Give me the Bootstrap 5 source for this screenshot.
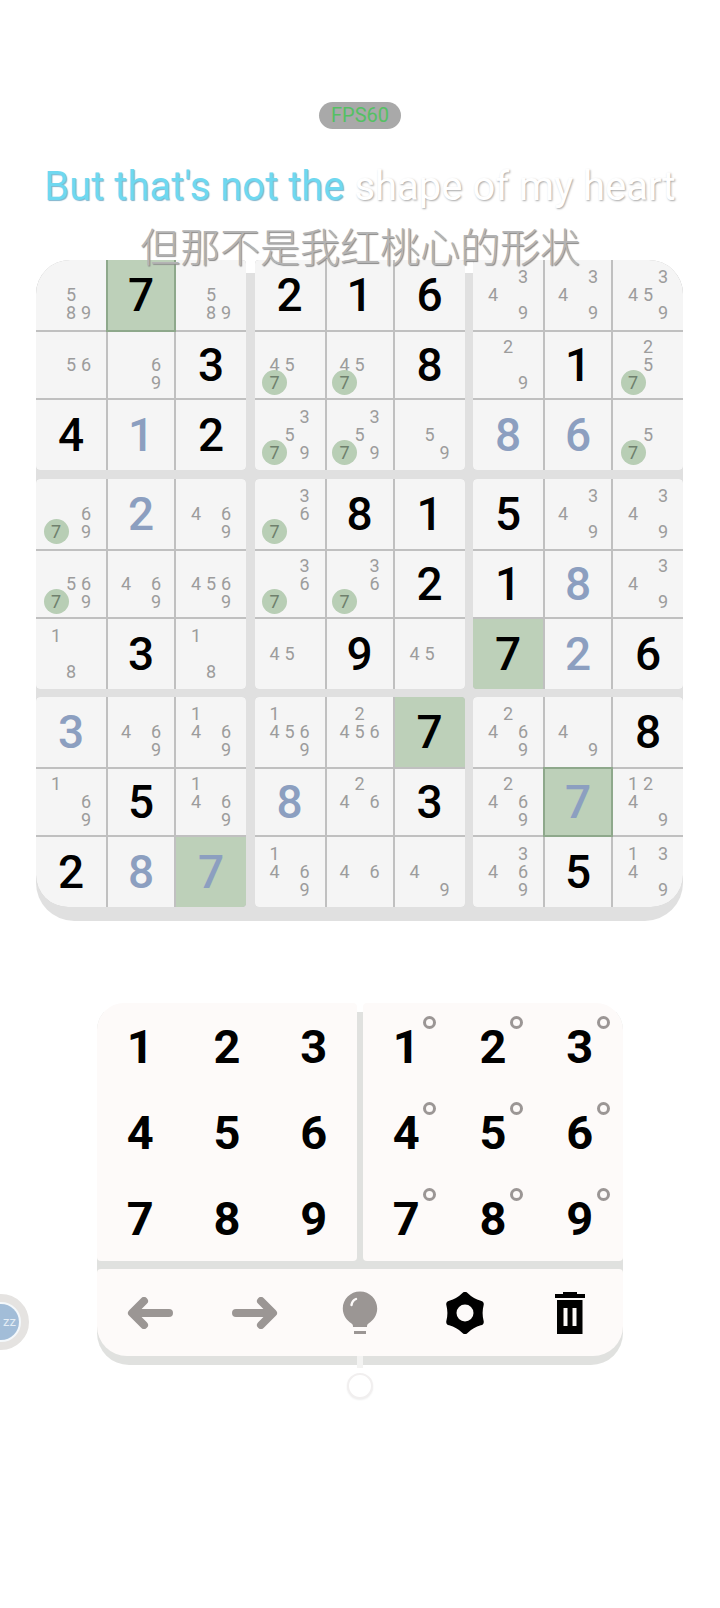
<!DOCTYPE html>
<html lang="en">
<head>
    <meta charset="UTF-8">
    <meta name="viewport" content="width=device-width, initial-scale=1.0">
    <title>Sudoku</title>
    <link href="https://cdn.jsdelivr.net/npm/bootstrap@5.3.2/dist/css/bootstrap.min.css" rel="stylesheet">
    <style>
        body {
            background: #fff;
            width: 720px;
            height: 1608px;
            overflow: hidden;
            font-family: Roboto, "Liberation Sans", sans-serif;
        }
        .screen { padding-top: 102px; height: 1608px; }
        .fps-pill {
            width: 82px;
            height: 27px;
            border-radius: 14px;
            background: #a9a9a9;
            color: #55c063;
            font: 400 20px/27px Roboto, sans-serif;
            text-align: center;
        }
        .lyric-en {
            margin-top: 31px;
            height: 53px;
            font: 400 40px/53px Roboto, sans-serif;
            white-space: nowrap;
            color: #fff;
            text-shadow: 1px 1px 2px #a8a8a8;
        }
        .lyric-en b {
            font-weight: 400;
            color: #6fd8f0;
            text-shadow: 1px 1px 1px #7fb4cc;
        }
        .lyric-zh {
            position: relative;
            z-index: 2;
            margin-top: 10px;
            height: 37px;
            font: 300 40px/44px "Noto Sans CJK SC", sans-serif;
            white-space: nowrap;
            color: #b4b4b4;
            text-shadow: 1px 1px 1px #888;
        }
        .board {
            display: grid;
            grid-template-columns: repeat(3, 210px);
            gap: 8.5px;
            padding-bottom: 14px;
            width: 647px;
            margin-right: 1px;
            border-radius: 34px 34px 38px 38px;
            background: linear-gradient(#fff 13px, #e0e0e0 13px);
        }
        .box-3x3 {
            display: grid;
            grid-template-columns: 70px 66px 70px;
            grid-template-rows: 70px 66px 70px;
            gap: 2px;
            height: 210px;
            background: #c0c0c0;
            border-radius: 4px;
            overflow: hidden;
        }
        .box-tl { border-top-left-radius: 34px; }
        .box-tr { border-top-right-radius: 34px; }
        .box-bl { border-bottom-left-radius: 32px; }
        .box-br { border-bottom-right-radius: 32px; }
        .sq {
            display: flex;
            align-items: center;
            justify-content: center;
            background: #f5f5f5;
            color: #000;
            font-size: 46px;
            font-weight: 500;
            line-height: 1;
        }
        .sq-user { color: #8c9fc0; }
        .sq-same { background: #bdd0b9; }
        .sq-cur { outline: 2px solid #8ea88b; position: relative; }
        .marks {
            display: grid;
            grid-template-columns: repeat(3, 15px);
            grid-template-rows: repeat(3, 18px);
            font-size: 18px;
            font-weight: 400;
            line-height: 18px;
            color: #9c9c9c;
            text-align: center;
        }
        .mk-hit { position: relative; color: #6f806d; }
        .mk-hit::before {
            content: "";
            position: absolute;
            left: -5px;
            top: -4px;
            width: 25px;
            height: 25px;
            border-radius: 50%;
            background: #b8ceb5;
        }
        .mk-hit span { position: relative; }
        .keypad {
            position: relative;
            width: 526px;
            margin-top: 82px;
            padding-bottom: 9px;
            border-radius: 27px 27px 32px 32px;
            background: linear-gradient(#fff 9px, #e0e1df 9px);
        }
        .key-pads { display: grid; grid-template-columns: 260px 260px; gap: 6px; margin-bottom: 8px; }
        .key-pad {
            display: grid;
            grid-template-columns: repeat(3, 1fr);
            grid-template-rows: repeat(3, 86px);
            background: #fdfaf9;
            border-radius: 4px;
        }
        .key-pad-l { border-top-left-radius: 27px; }
        .key-pad-r { border-top-right-radius: 27px; }
        .key {
            position: relative;
            display: flex;
            align-items: center;
            justify-content: center;
            color: #000;
            font-size: 47px;
            font-weight: 700;
            line-height: 1;
        }
        .key-ring {
            position: absolute;
            left: calc(50% + 17px);
            top: 13px;
            width: 13px;
            height: 13px;
            border: 3.500px solid #9b9695;
            border-radius: 50%;
        }
        .tool-bar {
            display: grid;
            grid-template-columns: repeat(5, 1fr);
            height: 87px;
            background: #fdfaf9;
            border-radius: 4px 4px 30px 30px;
        }
        .tool-btn { display: flex; align-items: center; justify-content: center; }
        .stem {
            position: absolute;
            left: 260px;
            top: 353px;
            width: 6px;
            height: 12px;
            background: #f3f3f2;
        }
        .dock-ring {
            position: absolute;
            left: 250px;
            top: 370px;
            width: 26px;
            height: 26px;
            border-radius: 50%;
            background: #fff;
            border: 2px solid #f1efef;
            box-shadow: 0 1px 2px #eeeeee;
        }
        .side-bubble {
            position: absolute;
            left: -27px;
            top: 1294px;
            width: 56px;
            height: 56px;
            border-radius: 50%;
            border: 8px solid #e5e3e1;
            background: #f4f8fb;
            display: flex;
            align-items: center;
            justify-content: center;
        }
        .side-bubble-in {
            width: 36px;
            height: 36px;
            border-radius: 50%;
            background: #a2bdd8;
            color: #e4edf5;
            font: 400 13px/36px Roboto, sans-serif;
            text-align: right;
            padding-right: 3px;
        }
    </style>
</head>
<body>
    <div class="screen position-relative d-flex flex-column align-items-center">
        <div class="fps-pill">FPS60</div>
        <div class="lyric-en"><b>But that's not the</b> shape of my heart</div>
        <div class="lyric-zh">但那不是我红桃心的形状</div>
        <div class="board" id="board"></div>

        <div class="keypad">
            <div class="key-pads">
                <div class="key-pad key-pad-l" id="padNormal"></div>
                <div class="key-pad key-pad-r" id="padPencil"></div>
            </div>
            <div class="tool-bar">
                <div class="tool-btn">
                    <svg width="46" height="32" viewBox="0 0 46 32" fill="none" stroke="#9b9694" stroke-width="8" stroke-linecap="round" stroke-linejoin="round"><path d="M42 16H6M17 4 5 16l12 12"/></svg>
                </div>
                <div class="tool-btn">
                    <svg width="46" height="32" viewBox="0 0 46 32" fill="none" stroke="#9b9694" stroke-width="8" stroke-linecap="round" stroke-linejoin="round"><path d="M4 16h36M29 4l12 12-12 12"/></svg>
                </div>
                <div class="tool-btn">
                    <svg width="36" height="44" viewBox="0 0 36 44">
                        <path fill="#9b9694" d="M18 0.500C8.300 0.500 .8 8.200 .8 17.500c0 6.700 4 12 8.700 15 1.400.9 1.500 2 1.500 3.500h14c0-1.500.1-2.600 1.500-3.500 4.700-3 8.700-8.300 8.700-15C35.200 8.200 27.700.5 18 .5z"/>
                        <rect x="12" y="40" width="12" height="3" fill="#9b9694"/>
                        <path fill="none" stroke="#fdfaf9" stroke-width="2.400" stroke-linecap="round" d="M9.500 14c.5-3 2-5 4.500-6"/>
                    </svg>
                </div>
                <div class="tool-btn">
                    <svg width="40" height="42" viewBox="0 0 40 42">
                        <path fill="#000" stroke="#000" stroke-width="8" stroke-linejoin="round" d="M20 4Q26.250 10.200 34.700 12.500Q32.500 21 34.700 29.500Q26.250 31.800 20 38Q13.750 31.800 5.300 29.500Q7.500 21 5.300 12.500Q13.750 10.200 20 4z"/>
                        <circle cx="20" cy="21" r="8.500" fill="#fdfaf9"/>
                    </svg>
                </div>
                <div class="tool-btn">
                    <svg width="30" height="42" viewBox="0 0 30 42">
                        <path fill="#000" fill-rule="evenodd" d="M8 0h14v2h8v4H0V2h8zM2 8h25.500v34H2zM8.500 16v18h4V16zm9 0v18h4V16z"/>
                    </svg>
                </div>
            </div>
            <div class="stem"></div>
            <div class="dock-ring"></div>
        </div>

        <div class="side-bubble"><div class="side-bubble-in">zz</div></div>
    </div>

    <script src="https://cdn.jsdelivr.net/npm/bootstrap@5.3.2/dist/js/bootstrap.bundle.min.js"></script>
    <script>
        // digit = given, "u" prefix = entered by the player, "#" = same-number highlight, "!" = current cell
        const rows = [
            ['589', '#7!', '589', '2', '1', '6', '349', '349', '3459'],
            ['56', '69', '3', '457', '457', '8', '29', '1', '257'],
            ['4', 'u1', '2', '3579', '3579', '59', 'u8', 'u6', '57'],
            ['679', 'u2', '469', '367', '8', '1', '5', '349', '349'],
            ['5679', '469', '4569', '367', '367', '2', '1', 'u8', '349'],
            ['18', '3', '18', '45', '9', '45', '#7', 'u2', '6'],
            ['u3', '469', '1469', '14569', '2456', '#7', '2469', '49', '8'],
            ['169', '5', '1469', 'u8', '246', '3', '2469', '#u7!', '1249'],
            ['2', 'u8', '#u7', '1469', '46', '49', '3469', '5', '1349']
        ];

        function buildCell(spec) {
            const cell = document.createElement('div');
            cell.className = 'sq';
            if (spec.includes('#')) cell.classList.add('sq-same');
            if (spec.includes('!')) cell.classList.add('sq-cur');
            if (spec.includes('u')) cell.classList.add('sq-user');
            const digits = spec.replace(/[#!u]/g, '');
            // one digit means a placed number, more means pencil marks
            if (digits.length === 1) {
                cell.textContent = digits;
                return cell;
            }
            const marks = document.createElement('div');
            marks.className = 'marks';
            for (let n = 1; n <= 9; n++) {
                const slot = document.createElement('div');
                if (digits.includes(n)) {
                    if (n === 7) {
                        slot.className = 'mk-hit';
                        slot.innerHTML = '<span>7</span>';
                    } else {
                        slot.textContent = n;
                    }
                }
                marks.appendChild(slot);
            }
            cell.appendChild(marks);
            return cell;
        }

        const board = document.getElementById('board');
        const corners = { 0: 'box-tl', 2: 'box-tr', 6: 'box-bl', 8: 'box-br' };
        for (let b = 0; b < 9; b++) {
            const box = document.createElement('div');
            box.className = 'box-3x3 ' + (corners[b] || '');
            for (let i = 0; i < 9; i++) {
                const r = Math.floor(b / 3) * 3 + Math.floor(i / 3);
                const c = (b % 3) * 3 + (i % 3);
                box.appendChild(buildCell(rows[r][c]));
            }
            board.appendChild(box);
        }

        function fillPad(id, ring) {
            const pad = document.getElementById(id);
            for (let n = 1; n <= 9; n++) {
                const key = document.createElement('div');
                key.className = 'key';
                key.textContent = n;
                if (ring) {
                    const dot = document.createElement('span');
                    dot.className = 'key-ring';
                    key.appendChild(dot);
                }
                pad.appendChild(key);
            }
        }
        fillPad('padNormal', false);
        fillPad('padPencil', true);
    </script>
</body>
</html>
